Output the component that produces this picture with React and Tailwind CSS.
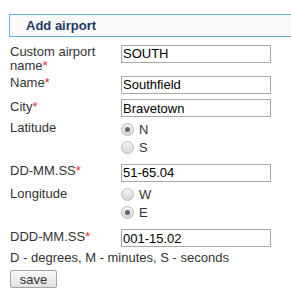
import React from "react";

const Req = () => <span className="text-[#e5322d]">*</span>;

const Radio = ({ checked, label }) => (
  <div className="flex items-center h-[18px]">
    <span className="w-[13px] h-[13px] rounded-full border border-[#b9b9b9] bg-gradient-to-b from-[#f4f4f4] to-[#d6d6d6] flex items-center justify-center">
      {checked && <span className="w-[5px] h-[5px] rounded-full bg-[#666]" />}
    </span>
    <span className="ml-[5px] leading-[13px]">{label}</span>
  </div>
);

const Field = ({ value }) => (
  <input
    readOnly
    value={value}
    className="w-[150px] h-[18px] border border-[#a9a9a9] px-[1px] text-[13px] text-black outline-none font-['Liberation_Sans',sans-serif]"
  />
);

const Row = ({ label, className, children }) => (
  <div className={"flex " + (className || "")}>
    <div className="w-[111px] pt-[1px] leading-[14px]">{label}</div>
    <div>{children}</div>
  </div>
);

export default function App() {
  return (
    <div className="w-[291px] h-[299px] bg-white overflow-hidden font-['Liberation_Sans',Arial,sans-serif] text-[13px] text-[#333]">
      {/* Header */}
      <div className="mt-[14px] ml-[9px] h-[23px] border border-r-0 border-[#5cb6e8] bg-[#fafafa] pl-[16px] flex items-center font-bold text-[#1e3a68]">
        Add airport
      </div>

      <div className="pl-[10px] pt-[7px]">
        <Row label={<>Custom airport<br />name<Req /></>}>
          <Field value="SOUTH" />
        </Row>
        <Row label={<>Name<Req /></>} className="mt-[2px]">
          <Field value="Southfield" />
        </Row>
        <Row label={<>City<Req /></>} className="mt-[4px]">
          <Field value="Bravetown" />
        </Row>
        <Row label="Latitude" className="mt-[2px]">
          <Radio checked label="N" />
          <Radio label="S" />
        </Row>
        <Row label={<>DD-MM.SS<Req /></>} className="mt-[7px]">
          <Field value="51-65.04" />
        </Row>
        <Row label="Longitude" className="mt-[3px]">
          <Radio label="W" />
          <Radio checked label="E" />
        </Row>
        <Row label={<>DDD-MM.SS<Req /></>} className="mt-[7px]">
          <Field value="001-15.02" />
        </Row>
        <div className="mt-[2px] leading-[15px]">D - degrees, M - minutes, S - seconds</div>
        <button className="mt-[5px] w-[47px] h-[18px] border border-[#a6a6a6] rounded-[2px] bg-gradient-to-b from-[#fafafa] to-[#e2e2e2] text-[13px] leading-none text-[#333]">
          save
        </button>
      </div>
    </div>
  );
}
